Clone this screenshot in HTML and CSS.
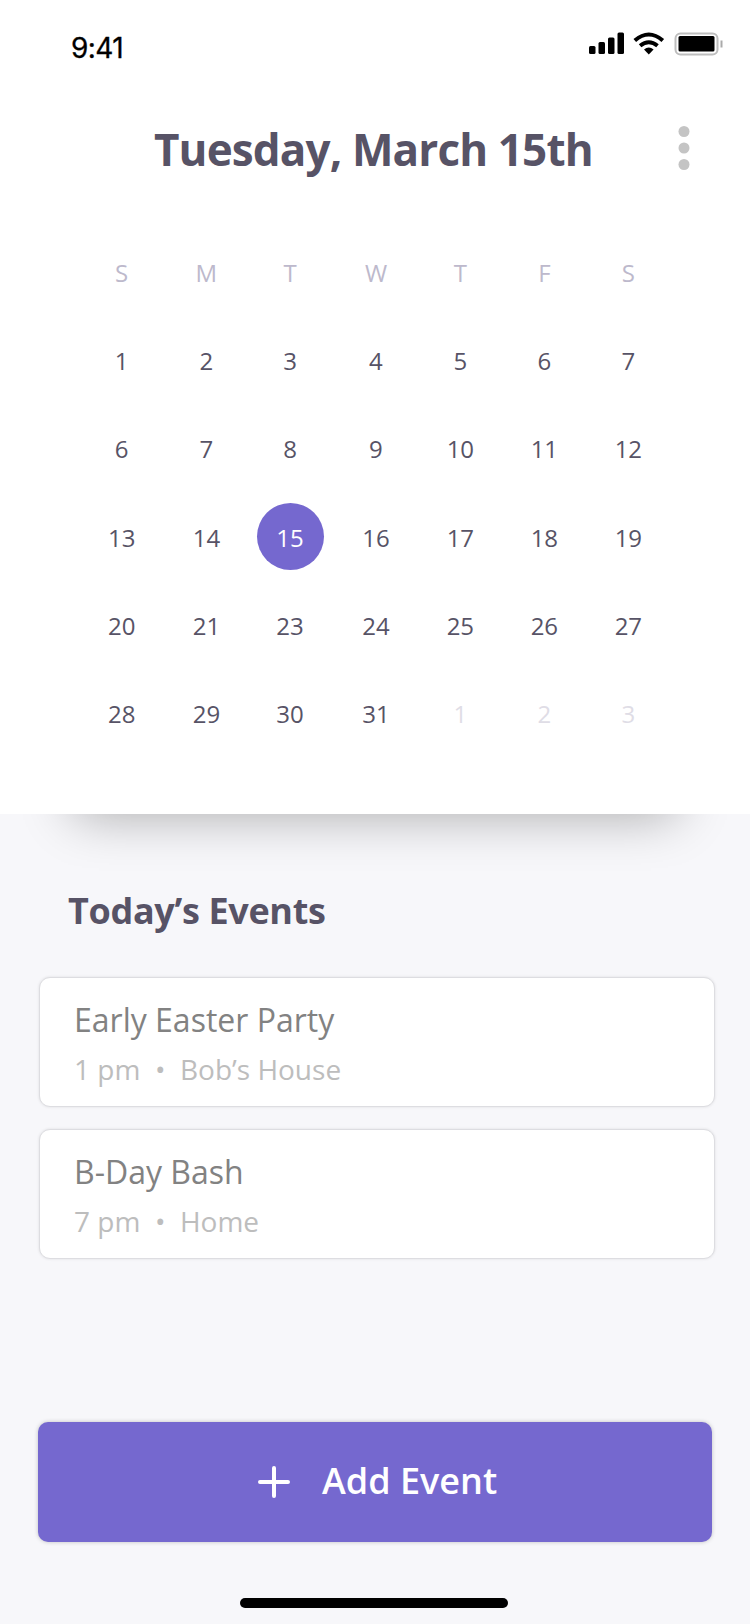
FILE: index.html
```html
<!DOCTYPE html>
<html lang="en">
<head>
<meta charset="utf-8">
<title>Calendar</title>
<link rel="stylesheet" href="styles.css">
</head>
<body>
<main class="screen">
  <section class="calendar">
    <div class="status">
      <span class="time">9:41</span>
      <svg class="status-icons" width="142" height="30" viewBox="0 0 142 30">
        <rect x="9" y="16" width="6.500" height="8" rx="1.500"/>
        <rect x="18.500" y="12" width="6.500" height="12" rx="1.500"/>
        <rect x="28" y="7.500" width="6.500" height="16.500" rx="1.500"/>
        <rect x="37.500" y="2.500" width="6.500" height="21.500" rx="1.500"/>
        <path class="wave" d="M54.800 10.500Q68.800-1.500 82.800 10.500M60.100 15.800Q68.800 8.700 77.500 15.800"/>
        <path d="M64 19.400Q68.800 15.800 73.600 19.400L68.800 24.400Z"/>
        <rect class="shell" x="95.500" y="3.500" width="42" height="21" rx="5"/>
        <rect x="98.500" y="6" width="36" height="15.500" rx="1.500"/>
        <path class="cap" d="M141.500 10.500V17.500"/>
      </svg>
    </div>
    <header class="header">
      <h1 class="title">Tuesday, March 15th</h1>
      <svg class="more" width="12" height="44" viewBox="0 0 12 44"><circle cx="6" cy="5.500" r="5.500"/><circle cx="6" cy="22" r="5.500"/><circle cx="6" cy="38.500" r="5.500"/></svg>
    </header>
    <div class="days">
      <span class="weekday">S</span><span class="weekday">M</span><span class="weekday">T</span><span class="weekday">W</span><span class="weekday">T</span><span class="weekday">F</span><span class="weekday">S</span>
      <span>1</span><span>2</span><span>3</span><span>4</span><span>5</span><span>6</span><span>7</span>
      <span>6</span><span>7</span><span>8</span><span>9</span><span>10</span><span>11</span><span>12</span>
      <span>13</span><span>14</span><span class="selected">15</span><span>16</span><span>17</span><span>18</span><span>19</span>
      <span>20</span><span>21</span><span>23</span><span>24</span><span>25</span><span>26</span><span>27</span>
      <span>28</span><span>29</span><span>30</span><span>31</span><span class="next">1</span><span class="next">2</span><span class="next">3</span>
    </div>
  </section>
  <section class="events">
    <h2 class="heading">Today’s Events</h2>
    <article class="event">
      <h3 class="name">Early Easter Party</h3>
      <p class="detail">1 pm&nbsp; •&nbsp; Bob’s House</p>
    </article>
    <article class="event">
      <h3 class="name">B-Day Bash</h3>
      <p class="detail">7 pm&nbsp; •&nbsp; Home</p>
    </article>
  </section>
  <footer class="footer">
    <button class="add">
      <svg class="plus" width="32" height="32" viewBox="0 0 32 32"><path d="M16 2V30M2 16H30"/></svg>
      <span>Add Event</span>
    </button>
    <div class="home"></div>
  </footer>
</main>
</body>
</html>
```

FILE: styles.css
```css
* { box-sizing: border-box; margin: 0; }
body { background: #f7f7fa; font-family: "Open Sans", sans-serif; }
.screen { width: 750px; height: 1624px; display: flex; flex-direction: column; overflow: hidden; }
.calendar {
  height: 814px;
  flex: none;
  background: #fff;
  box-shadow: 0 74px 50px -74px rgba(0, 0, 0, .33);
}
.status { height: 90px; padding: 30px 28px 0 71px; display: flex; justify-content: space-between; }
.time { font: 400 28px/36px Inter, sans-serif; -webkit-text-stroke: .3px #000; letter-spacing: -.6px; }
.status-icons { overflow: visible; }
.wave { fill: none; stroke: #000; stroke-width: 4; }
.shell { fill: none; stroke: #bebebe; stroke-width: 2; }
.cap { stroke: #aaa; stroke-width: 2; }
.header { height: 138px; padding: 30px 60px 0 154px; display: flex; justify-content: space-between; align-items: flex-start; }
.title { font-size: 44px; line-height: 59px; font-weight: 700; letter-spacing: -.86px; color: #575366; white-space: nowrap; }
.more { fill: #c4c4c4; margin-top: 6px; }
.days {
  margin: .1px 0 0 77.200px;
  display: grid;
  grid-template-columns: 89px 80.400px 87px 84.800px repeat(3, 84px);
  grid-auto-rows: 88.300px;
  place-items: center;
  font-size: 24px;
  line-height: 67px;
  color: #575366;
}
.weekday { color: #bdb9cc; }
.next { color: #dfdde6; }
.selected { width: 67px; height: 67px; border-radius: 50%; text-align: center; line-height: 69px; margin-top: -1px; background: #7568cf; color: #fff; }
.events { padding: 72px 35px 0 39px; display: flex; flex-direction: column; }
.heading { padding-left: 29px; font-size: 36px; line-height: 50px; font-weight: 700; letter-spacing: -.34px; color: #575366; margin-bottom: 41px; }
.event {
  height: 130px;
  margin-bottom: 22px;
  padding: 20px 34px;
  background: #fff;
  border: 1px solid #dddde1;
  border-radius: 11px;
  box-shadow: 0 0 3px rgba(0, 0, 0, .1);
}
.name { font-size: 32px; line-height: 44px; font-weight: 400; color: #828282; }
.detail { margin-top: 8px; font-size: 28px; line-height: 38px; color: #bdbdbd; }
.footer { margin-top: auto; height: 202px; padding-left: 38px; }
.add {
  width: 674px;
  height: 120px;
  border: 0;
  border-radius: 10px;
  background: #7568cf;
  box-shadow: 0 0 4px rgba(0, 0, 0, .22);
  color: #fff;
  font: 600 36px/50px "Open Sans", sans-serif;
  display: flex;
  align-items: center;
  justify-content: flex-start;
  gap: 32px;
  padding: 0 0 0 220px;
}
.add span { margin-top: -2px; }
.plus { fill: none; stroke: #fff; stroke-width: 4; stroke-linecap: round; }
.home { width: 268px; height: 10px; margin: 56px 0 0 202px; border-radius: 5px; background: #000; }
```
